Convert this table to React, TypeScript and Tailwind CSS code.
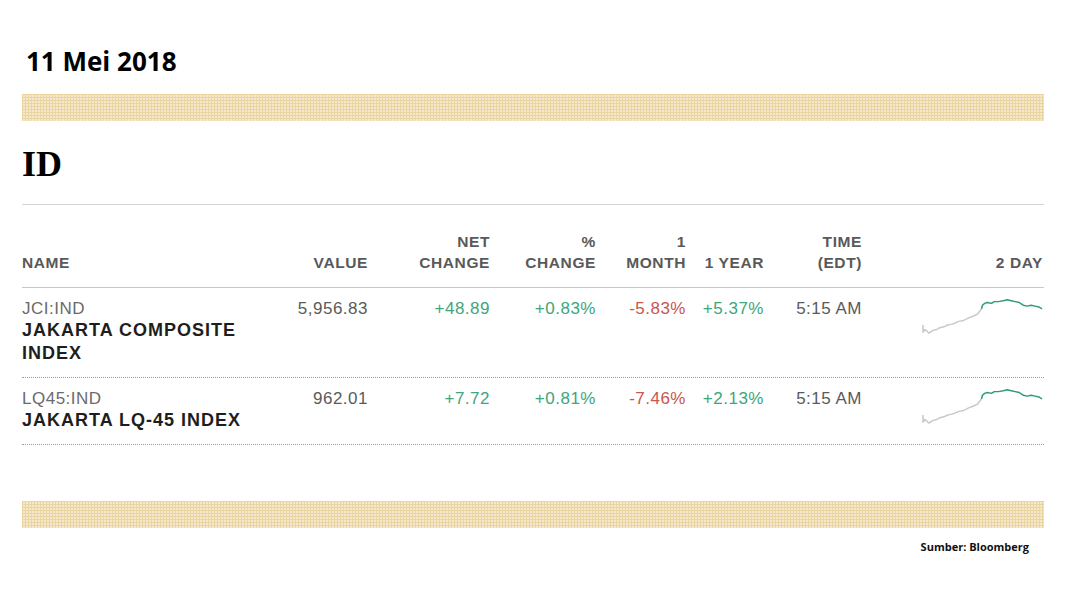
import React from 'react'

type Row = {
  ticker: string
  name: string[]
  value: string
  net: string
  pct: string
  month: string
  year: string
  time: string
}

const rows: Row[] = [
  {
    ticker: 'JCI:IND',
    name: ['JAKARTA COMPOSITE', 'INDEX'],
    value: '5,956.83',
    net: '+48.89',
    pct: '+0.83%',
    month: '-5.83%',
    year: '+5.37%',
    time: '5:15 AM',
  },
  {
    ticker: 'LQ45:IND',
    name: ['JAKARTA LQ-45 INDEX'],
    value: '962.01',
    net: '+7.72',
    pct: '+0.81%',
    month: '-7.46%',
    year: '+2.13%',
    time: '5:15 AM',
  },
]

const cols = 'grid grid-cols-[228px_118px_122px_106px_90px_78px_98px_181px]'

function Stripe() {
  return (
    <div className="h-[27px] w-full bg-[#f6e9cb] bg-[linear-gradient(90deg,#e9d4a2_1px,transparent_1px),linear-gradient(#e9d4a2_1px,transparent_1px)] bg-[size:3px_3px]" />
  )
}

// 2-day sparkline: grey for the previous session, green for today
function Spark() {
  return (
    <svg width="121" height="36" viewBox="0 0 122 40" preserveAspectRatio="none">
      <path
        d="M1 30 L1 38 L3 35 L7 39 L11 36 L15 35 L18 33 L22 32 L26 30 L30 29 L33 28 L37 26 L42 25 L47 22 L52 20 L56 18 L60 12"
        fill="none"
        stroke="#c9c9c9"
        strokeWidth="1.6"
        strokeLinejoin="round"
      />
      <path
        d="M60 12 L61 8 L63 6 L66 5 L70 6 L73 4 L77 4 L82 3 L86 2 L90 3 L94 4 L98 5 L102 8 L106 9 L110 8 L114 9 L118 10 L121 12"
        fill="none"
        stroke="#2e9c76"
        strokeWidth="1.6"
        strokeLinejoin="round"
      />
    </svg>
  )
}

function Head({ top, bottom }: { top?: string; bottom: string }) {
  return (
    <div className="flex flex-col items-end justify-end text-right">
      {top && <span>{top}</span>}
      <span>{bottom}</span>
    </div>
  )
}

export default function App() {
  return (
    <div className="min-h-[606px] w-[1066px] bg-white px-[22px] font-['Liberation_Sans',Arial,sans-serif]">
      <h1 className="pl-[4px] pt-[46px] font-['Open_Sans',sans-serif] text-[26px] font-bold leading-[31px] text-black">
        11 Mei 2018
      </h1>

      <div className="mt-[17px]">
        <Stripe />
      </div>

      <h2 className="mt-[25px] font-['Liberation_Serif','Times_New_Roman',serif] text-[36px] font-bold leading-none text-black">
        ID
      </h2>

      <div className="mt-[22px] border-t border-[#d4d4d4]">
        <div
          className={`${cols} border-b border-[#c8c8c8] pb-[14px] pt-[26px] text-[15.5px] font-bold leading-[21px] tracking-[0.6px] text-[#595959]`}
        >
          <div className="flex items-end">NAME</div>
          <Head bottom="VALUE" />
          <Head top="NET" bottom="CHANGE" />
          <Head top="%" bottom="CHANGE" />
          <Head top="1" bottom="MONTH" />
          <Head bottom="1 YEAR" />
          <Head top="TIME" bottom="(EDT)" />
          <Head bottom="2 DAY" />
        </div>

        {rows.map((r) => (
          <div
            key={r.ticker}
            className={`${cols} items-start border-b border-dotted border-[#9a9a9a] pb-[12px] pt-[10px] text-[17px] leading-[21px] tracking-[0.5px]`}
          >
            <div>
              <div className="text-[#6b6b6b]">{r.ticker}</div>
              <div className="text-[18px] font-bold leading-[23px] tracking-[1px] text-[#1e1e1e]">
                {r.name.map((n) => (
                  <div key={n}>{n}</div>
                ))}
              </div>
            </div>
            <div className="text-right text-[#5a5a5a]">{r.value}</div>
            <div className="text-right text-[#3ea57c]">{r.net}</div>
            <div className="text-right text-[#3ea57c]">{r.pct}</div>
            <div className="text-right text-[#c9554c]">{r.month}</div>
            <div className="text-right text-[#3ea57c]">{r.year}</div>
            <div className="text-right text-[#5a5a5a]">{r.time}</div>
            <div className="flex justify-end">
              <Spark />
            </div>
          </div>
        ))}
      </div>

      <div className="mt-[56px]">
        <Stripe />
      </div>

      <div className="flex justify-end pr-[15px] pt-[11px]">
        <span className="font-['Open_Sans',sans-serif] text-[11px] font-bold text-[#111]">
          Sumber: Bloomberg
        </span>
      </div>
    </div>
  )
}
